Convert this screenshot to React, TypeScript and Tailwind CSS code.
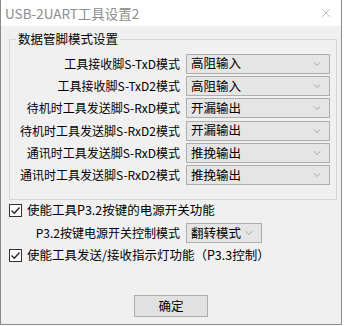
import { ChevronDown, X } from 'lucide-react';

const font = { fontFamily: '"Noto Sans CJK SC", "Liberation Sans", sans-serif' };

const pinRows = [
  { label: '工具接收脚S-TxD模式', value: '高阻输入' },
  { label: '工具接收脚S-TxD2模式', value: '高阻输入' },
  { label: '待机时工具发送脚S-RxD模式', value: '开漏输出' },
  { label: '待机时工具发送脚S-RxD2模式', value: '开漏输出' },
  { label: '通讯时工具发送脚S-RxD模式', value: '推挽输出' },
  { label: '通讯时工具发送脚S-RxD2模式', value: '推挽输出' },
];

function Select({ value, width }: { value: string; width: string }) {
  return (
    <div
      className={`${width} h-[20px] flex items-center justify-between border border-[#adadad] bg-[#e5e5e5] pl-[4px] pr-[6px] text-[12.5px] leading-none text-black shrink-0`}
    >
      <span className="whitespace-nowrap">{value}</span>
      <ChevronDown className="w-3 h-3 text-[#808080]" strokeWidth={1.25} />
    </div>
  );
}

function Check({ label }: { label: string }) {
  return (
    <div className="flex items-center gap-[5px] h-[20px]">
      <div className="w-[13px] h-[13px] border border-[#333] bg-white flex items-center justify-center shrink-0">
        <svg viewBox="0 0 11 11" className="w-[11px] h-[11px]">
          <path d="M1.5 5.5 L4.3 8.3 L9.5 2.5" fill="none" stroke="#222" strokeWidth="1.3" />
        </svg>
      </div>
      <span className="text-[12.5px] leading-none text-black whitespace-nowrap">{label}</span>
    </div>
  );
}

export default function App() {
  return (
    <div className="w-[344px] h-[326px] bg-white" style={font}>
      <div className="w-[342px] h-[325px] border border-[#8a8a8a] border-t-0 bg-[#f0f0f0] flex flex-col">
        {/* Title bar */}
        <div className="h-[26px] bg-white flex items-center justify-between pl-[4px] pr-[8px] shrink-0">
          <span className="text-[13.5px] text-[#8c8c8c]">USB-2UART工具设置2</span>
          <X className="w-[14px] h-[14px] text-[#8c8c8c]" strokeWidth={1} />
        </div>

        <div className="flex flex-col px-[8px] pt-[7px]">
          {/* Group box */}
          <fieldset className="border border-[#d5d5d5] h-[167px] mr-[-4px] pr-[6px]">
            <legend className="ml-[6px] px-[2px] text-[12.5px] leading-none text-black">数据管脚模式设置</legend>
            <div className="flex flex-col gap-[2.4px] pt-[8px]">
              {pinRows.map((row) => (
                <div key={row.label} className="flex items-center justify-end gap-[6px] h-[20px]">
                  <span className="text-[12px] leading-none text-black whitespace-nowrap">{row.label}</span>
                  <Select value={row.value} width="w-[144px]" />
                </div>
              ))}
            </div>
          </fieldset>

          <div className="flex flex-col gap-[2px] mt-[0px]">
            <Check label="使能工具P3.2按键的电源开关功能" />
            <div className="flex items-center justify-end gap-[6px] w-[253px] h-[20px] mt-[1px]">
              <span className="text-[12px] leading-none text-black whitespace-nowrap">P3.2按键电源开关控制模式</span>
              <Select value="翻转模式" width="w-[76px]" />
            </div>
            <Check label="使能工具发送/接收指示灯功能（P3.3控制）" />
          </div>

          <div className="flex justify-center mt-[30px]">
            <button
              type="button"
              className="w-[74px] h-[22px] border border-[#adadad] bg-[#e1e1e1] text-[12.5px] leading-none text-black"
            >
              确定
            </button>
          </div>
        </div>
      </div>
    </div>
  );
}
